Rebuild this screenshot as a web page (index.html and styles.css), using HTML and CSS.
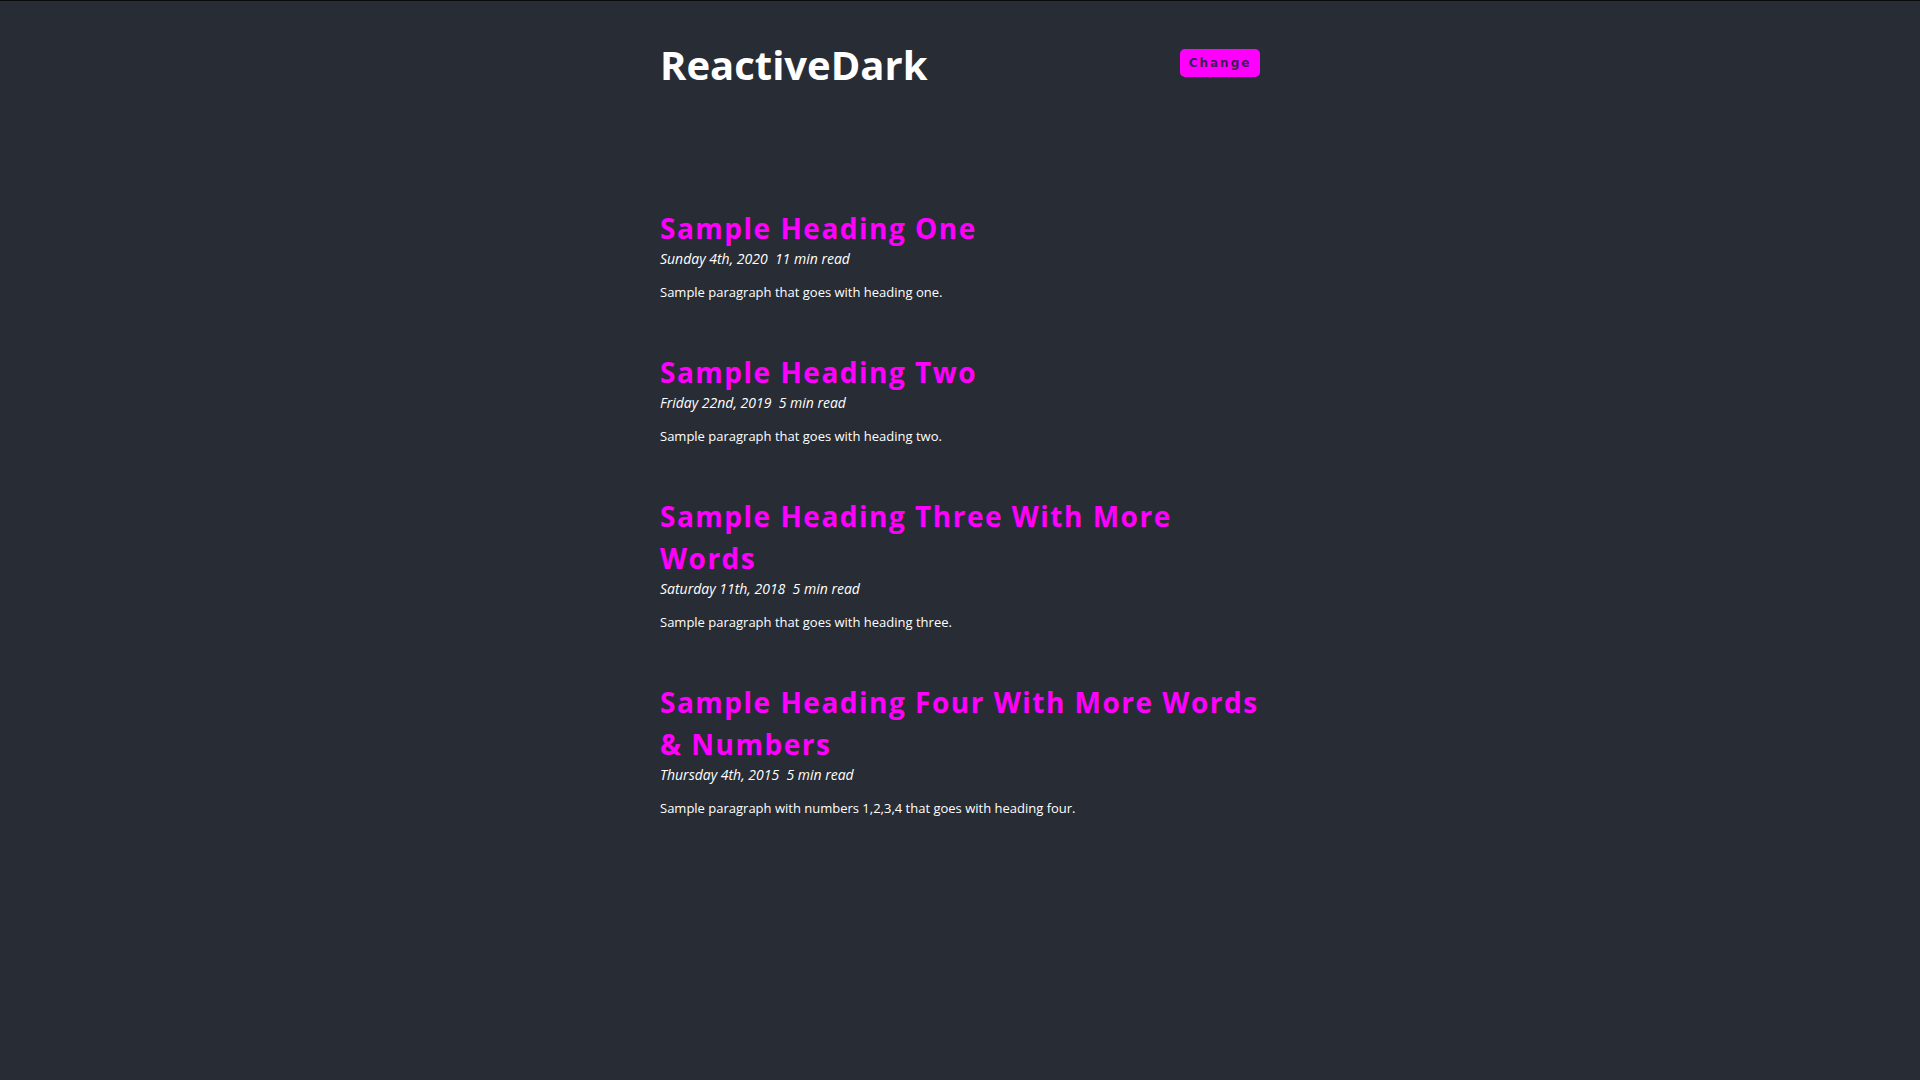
FILE: index.html
```html
<!DOCTYPE html>
<html lang="en">
<head>
<meta charset="utf-8">
<title>ReactiveDark</title>
<link rel="stylesheet" href="styles.css">
</head>
<body>
<div class="page">
  <header class="header">
    <h1 class="brand">ReactiveDark</h1>
    <button class="toggle">Change</button>
  </header>
  <main class="posts">
    <article class="post">
      <h2 class="post-title">Sample Heading One</h2>
      <p class="post-meta">Sunday 4th, 2020&nbsp; 11 min read</p>
      <p class="post-body">Sample paragraph that goes with heading one.</p>
    </article>
    <article class="post">
      <h2 class="post-title">Sample Heading Two</h2>
      <p class="post-meta">Friday 22nd, 2019&nbsp; 5 min read</p>
      <p class="post-body">Sample paragraph that goes with heading two.</p>
    </article>
    <article class="post">
      <h2 class="post-title">Sample Heading Three With More Words</h2>
      <p class="post-meta">Saturday 11th, 2018&nbsp; 5 min read</p>
      <p class="post-body">Sample paragraph that goes with heading three.</p>
    </article>
    <article class="post">
      <h2 class="post-title">Sample Heading Four With More Words &amp; Numbers</h2>
      <p class="post-meta">Thursday 4th, 2015&nbsp; 5 min read</p>
      <p class="post-body">Sample paragraph with numbers 1,2,3,4 that goes with heading four.</p>
    </article>
  </main>
</div>
</body>
</html>
```
FILE: styles.css
```css
html, body {
  margin: 0;
  padding: 0;
}
body {
  background: #282c35;
  color: #ffffff;
  font-family: "Open Sans", "Noto Sans", sans-serif;
  border-top: 1px solid #0b0b0b;
  min-height: 1079px;
}
.page {
  width: 600px;
  margin: 0 auto;
}
.header {
  display: flex;
  justify-content: space-between;
  align-items: flex-start;
  padding-top: 40px;
}
.brand {
  margin: 0;
  font-size: 40px;
  line-height: 48px;
  font-weight: 700;
  color: #ffffff;
}
.toggle {
  margin-top: 8px;
  width: 80px;
  height: 28px;
  border: none;
  border-radius: 5px;
  background: #ff00ff;
  color: #3a2250;
  font-family: "DejaVu Sans", sans-serif;
  font-weight: 700;
  font-size: 12px;
  letter-spacing: 2px;
  padding: 0;
  cursor: pointer;
}
.posts {
  margin-top: 118px;
}
.post {
  margin-bottom: 48px;
}
.post-title {
  margin: 0;
  font-size: 28px;
  line-height: 42px;
  font-weight: 700;
  letter-spacing: 1.5px;
  color: #ff00ff;
}
.post-meta {
  margin: 0;
  font-size: 14px;
  line-height: 20px;
  font-style: italic;
}
.post-body {
  margin: 12px 0 0;
  font-size: 13px;
  line-height: 22px;
}
```
